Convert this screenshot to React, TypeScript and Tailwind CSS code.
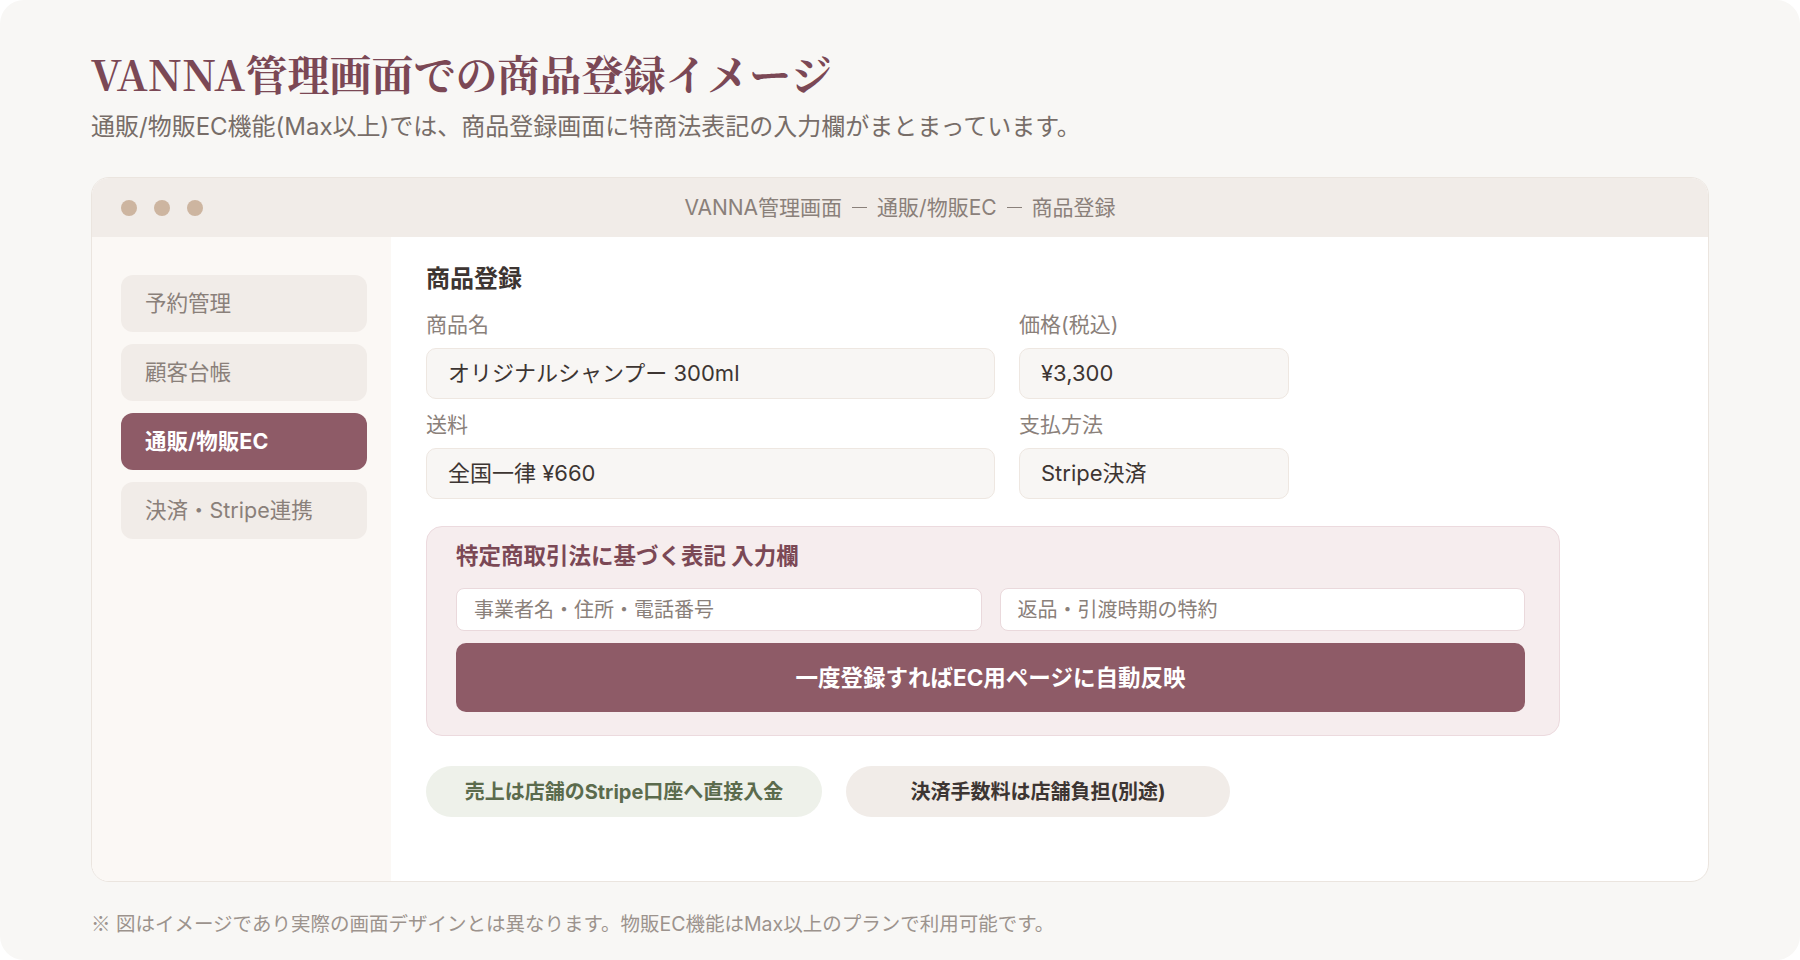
const sans = { fontFamily: "Inter, 'Noto Sans CJK JP', sans-serif" };
const cjk = { fontFamily: "'Noto Sans CJK JP', sans-serif" };

const navItems = ["予約管理", "顧客台帳", "通販/物販EC", "決済・Stripe連携"];

function Field({ label, value }: { label: string; value: string }) {
  return (
    <div>
      <div className="text-[21px] leading-[28px] text-[#8a807a]">{label}</div>
      <div className="mt-[9px] h-[51px] flex items-center pl-[21px] rounded-[10px] border border-[#eee7e1] bg-[#f8f6f4] text-[22px] text-[#3d3532]">
        {value}
      </div>
    </div>
  );
}

export default function App() {
  return (
    <div className="w-full h-[960px] bg-white" style={sans}>
      <div className="h-full rounded-[24px] bg-[#f8f7f5] px-[91px] pt-[48px]">
        {/* Heading */}
        <h1
          className="text-[42px] leading-[50px] font-bold text-[#7b4855] whitespace-nowrap"
          style={{ fontFamily: "'Noto Serif CJK JP', 'Liberation Serif', serif" }}
        >
          VANNA管理画面での商品登録イメージ
        </h1>
        <p className="mt-[13px] text-[24px] leading-[32px] text-[#776d68] whitespace-nowrap">
          通販/物販EC機能(Max以上)では、商品登録画面に特商法表記の入力欄がまとまっています。
        </p>

        {/* Window */}
        <div className="mt-[34px] h-[705px] rounded-[18px] border border-[#ebe5df] bg-white overflow-hidden flex flex-col">
          <div className="h-[59px] shrink-0 bg-[#f1ece8] grid grid-cols-[1fr_auto_1fr] items-center">
            <div className="flex gap-[17px] pl-[29px]">
              <span className="w-[16px] h-[16px] rounded-full bg-[#cdb5a0]" />
              <span className="w-[16px] h-[16px] rounded-full bg-[#cdb5a0]" />
              <span className="w-[16px] h-[16px] rounded-full bg-[#cdb5a0]" />
            </div>
            <div className="text-[21px] text-[#8a807a] whitespace-nowrap flex items-center">
              <span>VANNA管理画面</span>
              <span className="mx-[10px] w-[15px] h-[1.5px] bg-[#8a807a]" />
              <span>通販/物販EC</span>
              <span className="mx-[10px] w-[15px] h-[1.5px] bg-[#8a807a]" />
              <span>商品登録</span>
            </div>
            <div />
          </div>

          <div className="flex flex-1">
            {/* Sidebar */}
            <div className="w-[299px] shrink-0 bg-[#fbf8f5] pt-[38px] pl-[29px] flex flex-col gap-[12px]">
              {navItems.map((item) => (
                <div
                  key={item}
                  className={
                    item === "通販/物販EC"
                      ? "w-[246px] h-[57px] rounded-[12px] bg-[#8e5b67] text-white font-bold flex items-center pl-[24px] text-[21.5px]"
                      : "w-[246px] h-[57px] rounded-[12px] bg-[#f1ece8] text-[#8a807a] flex items-center pl-[24px] text-[21.5px]"
                  }
                >
                  {item}
                </div>
              ))}
            </div>

            {/* Main */}
            <div className="flex-1 pl-[35px] pt-[26px]">
              <div className="text-[24px] leading-[32px] font-bold text-[#3d3532]">商品登録</div>
              <div className="mt-[16px] grid grid-cols-[569px_270px] gap-x-[24px] gap-y-[12px]">
                <Field label="商品名" value="オリジナルシャンプー 300ml" />
                <Field label="価格(税込)" value="¥3,300" />
                <Field label="送料" value="全国一律 ¥660" />
                <Field label="支払方法" value="Stripe決済" />
              </div>

              <div className="mt-[27px] w-[1134px] rounded-[16px] border border-[#ecdade] bg-[#f6edee] pt-[15px] pb-[23px] pl-[29px]">
                <div className="text-[22.5px] leading-[28px] font-bold text-[#7b4855]">
                  特定商取引法に基づく表記 入力欄
                </div>
                <div className="mt-[18px] w-[1069px] grid grid-cols-2 gap-[18px]">
                  <div className="h-[43px] rounded-[8px] border border-[#ead9dc] bg-white flex items-center pl-[17px] text-[20px] text-[#8a807a]">
                    事業者名・住所・電話番号
                  </div>
                  <div className="h-[43px] rounded-[8px] border border-[#ead9dc] bg-white flex items-center pl-[17px] text-[20px] text-[#8a807a]">
                    返品・引渡時期の特約
                  </div>
                </div>
                <div className="mt-[12px] w-[1069px] h-[69px] rounded-[10px] bg-[#8e5b67] flex items-center justify-center text-white font-bold text-[22.5px]">
                  一度登録すればEC用ページに自動反映
                </div>
              </div>

              <div className="mt-[30px] flex gap-[24px]">
                <div className="w-[396px] h-[51px] rounded-full bg-[#eef1ea] flex items-center justify-center text-[20px] font-bold text-[#5b6b4d]">
                  売上は店舗のStripe口座へ直接入金
                </div>
                <div className="w-[384px] h-[51px] rounded-full bg-[#f1ece8] flex items-center justify-center text-[20px] font-bold text-[#3d3532]">
                  決済手数料は店舗負担(別途)
                </div>
              </div>
            </div>
          </div>
        </div>

        <p className="mt-[28px] text-[19.5px] leading-[26px] text-[#9c938d] whitespace-nowrap">
          <span style={cjk}>※</span> 図はイメージであり実際の画面デザインとは異なります。物販EC機能はMax以上のプランで利用可能です。
        </p>
      </div>
    </div>
  );
}
